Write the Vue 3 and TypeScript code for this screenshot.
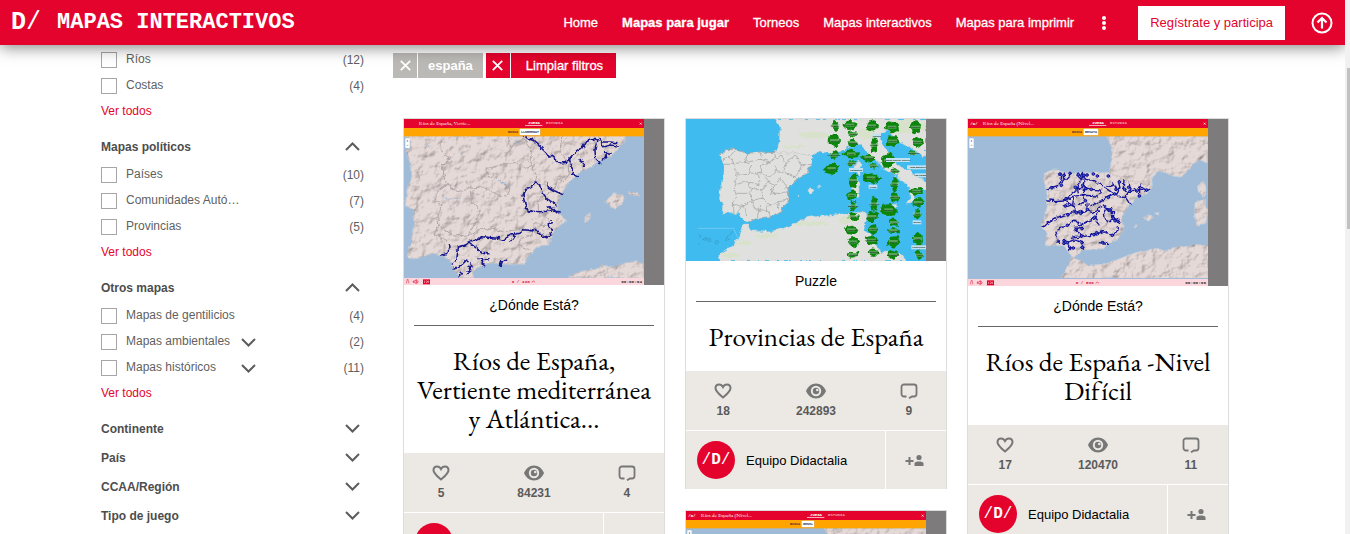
<script setup lang="ts">
import { ref } from 'vue'

type MapKind = 'coast' | 'provinces' | 'peninsula'

interface Facet { label: string; count: number; nested?: boolean }
interface FacetGroup { title?: string; items: Facet[] }
interface Card {
  id: string
  kind: MapKind
  width: number
  height: number
  bar?: { title: string; target: string; score: string; time: string; logo: boolean }
  game: string
  title: string
  likes: number
  views: number
  comments: number
}

const nav = ['Home', 'Mapas para jugar', 'Torneos', 'Mapas interactivos', 'Mapas para imprimir']
const current = 'Mapas para jugar'

const groups: FacetGroup[] = [
  { items: [{ label: 'Ríos', count: 12 }, { label: 'Costas', count: 4 }] },
  {
    title: 'Mapas políticos',
    items: [
      { label: 'Países', count: 10 },
      { label: 'Comunidades Autó…', count: 7 },
      { label: 'Provincias', count: 5 },
    ],
  },
  {
    title: 'Otros mapas',
    items: [
      { label: 'Mapas de gentilicios', count: 4 },
      { label: 'Mapas ambientales', count: 2, nested: true },
      { label: 'Mapas históricos', count: 11, nested: true },
    ],
  },
]
const collapsed = ['Continente', 'País', 'CCAA/Región', 'Tipo de juego']
const checked = ref<string[]>([])

const columns: Card[][] = [
  [
    {
      id: 'mediterranea', kind: 'coast', width: 780, height: 498,
      bar: { title: 'Ríos de España, Vertie…', target: 'LLOBREGAT', score: '0 / 220', time: '00:00:04', logo: false },
      game: '¿Dónde Está?', title: 'Ríos de España, Vertiente mediterránea y Atlántica...', likes: 5, views: 84231, comments: 4,
    },
  ],
  [
    {
      id: 'provincias', kind: 'provinces', width: 780, height: 426,
      game: 'Puzzle', title: 'Provincias de España', likes: 18, views: 242893, comments: 9,
    },
    {
      id: 'nivel-medio', kind: 'peninsula', width: 780, height: 501,
      bar: { title: 'Ríos de España (Nivel…', target: 'GENIL', score: '0 / 300', time: '00:00:05', logo: true },
      game: '¿Dónde Está?', title: 'Ríos de España -Nivel Medio', likes: 12, views: 98120, comments: 7,
    },
  ],
  [
    {
      id: 'nivel-dificil', kind: 'peninsula', width: 780, height: 501,
      bar: { title: 'Ríos de España (Nivel…', target: 'BESAYA', score: '0 / 590', time: '00:00:06', logo: true },
      game: '¿Dónde Está?', title: 'Ríos de España -Nivel Difícil', likes: 17, views: 120470, comments: 11,
    },
  ],
]

const coastLand =
  'M27 78 45 92 47 112 34 122 48 165 46 205 36 240 31 285 40 292 58 300 56 340 50 392 38 438 42 446 78 440 115 430 145 440 165 455 172 470 190 492 196 504 236 504 232 488 252 468 300 460 362 465 388 460 405 432 420 412 462 408 468 378 478 362 500 345 515 330 495 312 488 288 496 258 516 225 550 190 600 162 650 138 670 112 692 90 690 78Z M628 274 656 252 686 256 681 280 662 297 645 290 642 278Z M700 246 725 248 732 260 712 257Z M567 320 588 308 584 326 574 338Z M518 503 560 484 600 478 625 466 655 472 690 458 720 456 747 458 747 503Z'
const coastBorders = [
  'M140 78 137 120 165 145 140 165 148 195 155 225 122 250 124 272 140 288 128 320 132 345 120 372 155 390',
  'M155 225 188 245 225 235 262 230 312 255 338 258 345 235 310 205 280 200 270 180 330 160 365 158 395 175 410 168 425 200 418 230',
  'M225 235 232 280 256 298 245 330 222 375 175 378 132 345M222 375 270 355 330 365 390 352 440 375 450 345 420 340 410 375 380 385 370 405 405 420',
  'M338 78 348 110 385 85 410 120 402 150 412 168M500 78 495 130 520 155 525 190 505 215 490 200 480 235 455 255 430 270 430 300 455 320 470 340',
]
const coastRivers = [
  'M385 78 400 90 412 88 430 105 450 125 470 140 490 158 510 158 520 152 545 125 560 115 572 95 600 85 606 92 600 120 602 145 615 158',
  'M520 155 535 175 530 190 550 200M555 150 568 158 566 172M612 85 618 95 640 96 668 98M620 98 626 110 645 105 670 108M622 150 635 140 632 128 648 130',
  'M440 235 435 222 420 219 408 230 392 238 384 255 388 275 395 298 405 304 435 305 465 303 492 305M437 225 442 250 455 268 470 275 486 288M458 218 460 232 480 243 503 254M455 292 470 290 485 308M472 335 460 338 460 350 468 360 470 375',
  'M172 462 185 448 190 412 215 402 260 380 300 384 325 390 352 374 372 370 385 356 405 358 425 362 432 370 445 382 470 376M352 374 358 378 348 392',
  'M228 402 245 415 262 430 282 432M160 402 162 415 155 430 140 435M175 475 200 465 215 450 222 455M222 468 228 480 218 488 232 462M253 446 262 450 258 462 272 467M252 446 282 446M316 466 320 455 338 450M192 498 202 488',
]

const penLand =
  'M250 205 253 190 268 182 292 180 340 188 400 190 448 188 458 150 456 112 440 80 744 80 744 158 722 150 700 160 680 185 665 200 640 198 612 186 592 184 572 205 574 236 560 252 530 262 505 288 480 330 492 350 470 388 430 416 366 416 350 436 340 444 325 425 312 410 290 402 256 406 262 370 244 352 254 320 262 290 258 262 262 240Z M305 504 318 475 335 445 350 450 385 466 420 464 470 450 520 430 570 418 620 420 690 408 744 406 744 504Z M714 224 735 212 738 245 728 262 716 245Z M706 280 735 268 742 300 738 335 712 346 704 320Z M550 324 570 312 580 322 566 332Z M586 310 598 308 596 314Z M520 348 528 342 526 352Z'
const penBorders = [
  'M262 240 300 238 300 262 322 268 312 300 280 330 290 345 285 375 292 400',
  'M448 188 480 205 520 215 572 228M340 188 345 225 370 200 430 210 420 260 380 270 350 268M300 345 370 352 430 340 455 360 470 375',
]
const penRivers = [
  'M258 244 275 232 300 225 318 205 330 192M295 190 305 200 300 222M312 188 310 208M350 190 358 210 372 205 370 190 360 198 376 200',
  'M262 270 290 272 312 270 340 262 380 256 410 258 425 252 420 240 395 238 370 232 350 234 345 245 325 262',
  'M380 208 400 212 425 225 445 238 465 252 480 260 498 264 510 284M365 205 352 235 356 250M376 205 370 240 378 236',
  'M445 262 470 250 480 232 475 215M470 238 462 222 445 228M492 205 490 235 502 245M508 215 510 240 495 262M522 240 545 232 560 242 572 238M540 225 538 258M515 245 550 240',
  'M248 352 260 340 290 322 325 310 355 308 380 300 400 308 420 290 430 285 445 300M318 268 325 280 310 290M340 265 338 285 320 292M330 280 345 300 320 315M370 240 372 275 358 285M380 275 382 300M390 290 420 275 465 250',
  'M298 400 288 370 300 352 322 345 345 330 360 345 380 335 405 325 420 345M345 352 365 350M405 320 418 300',
  'M335 385 365 380 400 375 430 365 455 375 470 365 472 350M310 390 325 395 345 390 365 398M365 375 345 360M320 395 330 415 340 412M365 395 372 415M362 410 370 420M415 398 442 400',
  'M440 292 430 310 432 325 452 335M445 300 460 308 462 325 480 338M452 292 455 320 470 330M450 330 480 325',
]
const penDots = [
  [276, 233], [300, 192], [312, 196], [330, 190], [355, 194], [364, 198], [372, 196], [381, 195], [400, 192], [412, 198], [445, 198],
  [318, 266], [304, 226], [346, 232], [368, 226], [378, 236], [394, 238], [445, 262], [464, 252], [478, 216], [468, 238], [494, 238],
  [506, 232], [510, 244], [538, 258], [560, 240], [316, 288], [324, 314], [349, 308], [362, 310], [382, 298], [376, 272],
  [322, 346], [348, 358], [366, 356], [404, 322], [450, 300], [460, 325], [465, 332], [474, 334], [312, 392], [312, 400], [322, 398],
  [365, 378], [366, 398], [367, 412], [340, 414], [410, 368], [428, 398], [402, 374], [457, 376],
]

const provLand =
  'M287 27 300 50 298 95 288 128 245 126 200 130 165 118 140 118 118 136 132 160 128 200 116 260 128 282 126 312 175 310 190 335 205 338 230 325 272 320 305 302 328 268 320 238 345 215 380 190 398 158 394 138 415 122 445 130 480 128 510 108 545 106 562 130 590 150 615 180 655 200 690 235 690 268 680 282 700 275 712 240 738 238 738 215 705 195 690 180 650 165 632 130 605 105 598 75 625 62 660 95 738 140 738 27Z M600 292 650 282 640 318 605 305Z M535 150 545 165 535 198 525 175Z M510 215 535 205 538 262 515 262Z M120 453 120 430 160 405 180 375 190 345 205 345 212 362 262 366 330 350 380 322 450 316 520 308 555 306 560 330 550 360 580 380 600 425 660 430 680 453Z M380 240 395 232 402 242 392 250Z M412 230 420 228 420 233Z M354 260 360 256 358 264Z'
const provBorders = [
  'M128 150 150 142 165 118M150 142 158 160 130 160M158 160 195 158 205 130M195 158 240 148 245 128M240 148 272 155 288 128M272 155 300 135 318 160 345 135 362 165 395 160',
  'M158 160 172 192 205 190 215 165M205 190 240 188 245 165 272 155M240 188 270 200 290 180 310 190 318 160M310 190 345 200 365 165M345 200 350 212M290 180 285 165',
  'M172 192 162 230 170 260 160 282 162 310M170 222 205 215 240 225 235 190M205 215 215 240 200 250 170 250M215 240 250 238 262 215 285 225 300 205 315 225 320 238M262 215 255 200',
  'M160 282 190 290 215 270 250 265 270 285 298 272 325 268M215 270 208 250M250 265 245 240M270 285 262 300 272 320M190 290 200 318M215 270 225 300 262 300M298 272 295 300M270 250 285 225M270 250 300 250 320 245M240 285 232 322M185 290 172 308',
]

interface Piece { name: string; x: number; y: number; w: number; h: number }
const rawPieces: [string, number, number, number, number][] = [
  ['Cádiz', 466, 48, 26, 34], ['Huesca', 463, 92, 34, 42], ['Pontevedra', 462, 136, 22, 26], ['Córdoba', 455, 176, 48, 34],
  ['Toledo', 510, 46, 46, 26], ['Girona', 519, 73, 30, 18], ['Málaga', 519, 98, 32, 22], ['León', 514, 132, 46, 28],
  ['Melilla', 515, 160, 22, 14], ['Burgos', 521, 212, 26, 48], ['Jaén', 516, 256, 36, 28], ['Zaragoza', 519, 288, 22, 26],
  ['Soria', 520, 320, 32, 26], ['Asturias', 514, 360, 42, 26], ['Teruel', 519, 396, 32, 38], ['Vizcaya', 518, 434, 32, 18],
  ['Navarra', 575, 48, 38, 34], ['Lleida', 582, 106, 26, 46], ['Granada', 566, 143, 44, 22], ['Álava', 580, 168, 28, 20],
  ['Ciudad Real', 573, 204, 50, 32], ['Palencia', 583, 282, 18, 44], ['Sevilla', 576, 320, 36, 34], ['Almería', 580, 358, 30, 30],
  ['Guadalajara', 575, 391, 46, 26], ['Cantabria', 580, 427, 32, 22], ['Teruel', 636, 52, 38, 38], ['Huelva', 638, 94, 34, 36],
  ['Orense', 625, 152, 40, 46], ['Lugo', 645, 222, 22, 44], ['Murcia', 644, 262, 30, 28], ['Badajoz', 626, 300, 54, 36],
  ['Ávila', 642, 338, 26, 26], ['La Rioja', 640, 362, 32, 16], ['Madrid', 640, 395, 34, 36], ['Salamanca', 639, 434, 38, 26],
  ['Cuenca', 707, 52, 38, 38], ['Segovia', 713, 97, 32, 30], ['Tarragona', 700, 130, 22, 18], ['Albacete', 645, 184, 26, 20],
  ['Valencia', 710, 244, 38, 28], ['Alicante', 714, 278, 32, 30], ['Ávila', 711, 312, 26, 26], ['Lugo', 713, 386, 30, 34],
  ['Álava', 718, 436, 20, 28], ['Castellón', 718, 410, 20, 22],
]
const pieces: Piece[] = rawPieces.map(([name, x, y, w, h]) => ({ name, x, y, w, h }))
const islands: Piece[] = [
  ['Santa Cruz de Tenerife', 654, 150, 72], ['Islas Baleares', 714, 172, 66], ['Las Palmas', 722, 196, 34], ['Ceuta', 579, 230, 26],
  ['Guipúzcoa', 528, 180, 42], ['Pontevedra', 716, 412, 44], ['Melilla', 711, 337, 26], ['Vizcaya', 590, 77, 26],
].map(([name, x, y, w]) => ({ name: name as string, x: x as number, y: y as number, w: w as number, h: 11 }))

// Irregular outline of a puzzle piece, varied by its index
function outline(p: Piece, i: number): string {
  const corners = 14
  const points: string[] = []
  for (let k = 0; k < corners; k++) {
    const angle = (k / corners) * Math.PI * 2
    const reach = 0.92 + 0.12 * Math.sin(k * 2.1 + i * 1.7) + 0.1 * Math.sin(k * 0.9 + i)
    points.push(`${(p.x + (Math.cos(angle) * p.w * reach) / 1.9).toFixed(1)},${(p.y + (Math.sin(angle) * p.h * reach) / 1.9).toFixed(1)}`)
  }
  return points.join(' ')
}
</script>

<template>
  <div class="shell">
    <div class="page">
      <header class="topbar">
        <a class="brand" href="#"><span class="brand-d">D<i>/</i></span><span class="brand-name">MAPAS INTERACTIVOS</span></a>
        <nav class="nav">
          <a v-for="item in nav" :key="item" href="#" :class="{ active: item === current }">{{ item }}</a>
        </nav>
        <button class="icon-button more" type="button" aria-label="Más opciones">
          <svg width="4" height="14" viewBox="0 0 4 14" fill="#fff"><circle cx="2" cy="2" r="2" /><circle cx="2" cy="7" r="2" /><circle cx="2" cy="12" r="2" /></svg>
        </button>
        <a class="register" href="#">Regístrate y participa</a>
        <button class="icon-button up" type="button" aria-label="Subir">
          <svg width="22" height="22" viewBox="0 0 22 22" fill="none" stroke="#fff" stroke-width="2"><circle cx="11" cy="11" r="9.5" /><path d="M11 16.500V6.500M6.500 10.500 11 6l4.500 4.500" stroke-width="2.200" /></svg>
        </button>
      </header>

      <div class="content">
        <aside class="sidebar">
          <section v-for="(group, g) in groups" :key="g" class="group">
            <button v-if="group.title" class="group-head" type="button">
              {{ group.title }}
              <svg width="15" height="10" viewBox="0 0 15 10"><path d="M1 8 7.500 1.500 14 8" /></svg>
            </button>
            <ul class="facets" :class="{ headed: group.title }">
              <li v-for="item in group.items" :key="item.label">
                <input :id="item.label" v-model="checked" type="checkbox" :value="item.label" />
                <label :for="item.label">{{ item.label }}</label>
                <button v-if="item.nested" class="icon-button" type="button" :aria-label="'Desplegar ' + item.label">
                  <svg width="15" height="10" viewBox="0 0 15 10"><path d="M1 2l6.500 6.500L14 2" /></svg>
                </button>
                <span class="count">({{ item.count }})</span>
              </li>
            </ul>
            <a class="see-all" href="#">Ver todos</a>
          </section>
          <button v-for="name in collapsed" :key="name" class="group-head" type="button">
            {{ name }}
            <svg width="15" height="10" viewBox="0 0 15 10"><path d="M1 1l6.500 6.500L14 1" /></svg>
          </button>
        </aside>

        <main class="results">
          <div class="filters">
            <button class="chip" type="button">
              <span class="cross"><svg width="11" height="11" viewBox="0 0 11 11"><path d="M.8.8l9.400 9.400M10.200.8.8 10.200" /></svg></span>
              <span class="chip-text"><b>españa</b></span>
            </button>
            <button class="chip clear" type="button">
              <span class="cross"><svg width="11" height="11" viewBox="0 0 11 11"><path d="M.8.8l9.400 9.400M10.200.8.8 10.200" /></svg></span>
              <span class="chip-text">Limpiar filtros</span>
            </button>
          </div>

          <div class="columns">
            <div v-for="(column, c) in columns" :key="c" class="column">
              <article v-for="card in column" :key="card.id" class="card">
                <svg class="map" :viewBox="`0 0 ${card.width} ${card.height}`" role="img" :aria-label="card.title">
                  <defs>
                    <filter :id="'relief-' + card.id" x="0" y="0" width="100%" height="100%" color-interpolation-filters="sRGB">
                      <feTurbulence type="fractalNoise" baseFrequency=".03" numOctaves="5" seed="7" result="noise" />
                      <feDiffuseLighting surfaceScale="5" diffuseConstant="1.13" lighting-color="#fff" result="light">
                        <feDistantLight azimuth="225" elevation="62" />
                      </feDiffuseLighting>
                      <feDisplacementMap in="SourceGraphic" in2="noise" scale="12" xChannelSelector="R" yChannelSelector="G" result="shore" />
                      <feBlend in="shore" in2="light" mode="multiply" />
                      <feComposite in2="shore" operator="in" />
                    </filter>
                    <filter :id="'wiggle-' + card.id" x="-5%" y="-5%" width="110%" height="110%">
                      <feTurbulence type="fractalNoise" baseFrequency=".06" numOctaves="3" seed="3" result="noise" />
                      <feDisplacementMap in="SourceGraphic" in2="noise" scale="16" xChannelSelector="R" yChannelSelector="G" />
                    </filter>
                    <clipPath :id="'view-' + card.id"><rect width="720" :height="card.height" /></clipPath>
                    <clipPath :id="'land-' + card.id"><path :d="provLand" /></clipPath>
                  </defs>
                  <rect width="780" :height="card.height" fill="#7e7b7c" />

                  <g v-if="card.kind === 'coast'" :clip-path="`url(#view-${card.id})`">
                    <rect width="720" height="498" fill="#9fbbd7" />
                    <g transform="translate(-27 -27)" stroke-linejoin="round" stroke-linecap="round">
                      <path :d="coastLand" fill="#e5d9d7" stroke="#a5a3a6" stroke-width="1.500" :filter="`url(#relief-${card.id})`" />
                      <g :filter="`url(#wiggle-${card.id})`" fill="none">
                        <path v-for="d in coastBorders" :key="d" :d="d" stroke="#a39c9b" stroke-width="2.500" />
                        <path d="M190 120l10 15M145 262l20 5 30-2M350 90l25 12M180 425l-4 18M95 100l8 12M310 215l28 6" stroke="#9fbbd7" stroke-width="3" />
                        <path v-for="d in coastRivers" :key="d" :d="d" stroke="#13138c" stroke-width="4.500" />
                      </g>
                    </g>
                  </g>

                  <g v-else-if="card.kind === 'peninsula'" :clip-path="`url(#view-${card.id})`">
                    <rect width="720" height="501" fill="#9fbbd7" />
                    <g transform="translate(-24 -27)" stroke-linejoin="round" stroke-linecap="round">
                      <path :d="penLand" fill="#e5d9d7" stroke="#c4bfc4" stroke-width="1.500" :filter="`url(#relief-${card.id})`" />
                      <g :filter="`url(#wiggle-${card.id})`" fill="none">
                        <path v-for="d in penBorders" :key="d" :d="d" stroke="#b3acac" stroke-width="1.500" />
                        <path v-for="d in penRivers" :key="d" :d="d" stroke="#13139a" stroke-width="4" />
                      </g>
                      <circle v-for="([x, y], i) in penDots" :key="i" :cx="x" :cy="y" r="4" fill="#4a62c4" stroke="#10109a" stroke-width="3" />
                    </g>
                  </g>

                  <g v-else :clip-path="`url(#view-${card.id})`">
                    <rect width="720" height="426" fill="#3fbbf0" />
                    <g transform="translate(-18 -27)" stroke-linejoin="round">
                      <path :d="provLand" fill="#e0e1df" stroke="#c9d3d2" stroke-width="1.500" :filter="`url(#wiggle-${card.id})`" />
                      <g fill="#d3e3bd" opacity=".6" :clip-path="`url(#land-${card.id})`">
                        <g :filter="`url(#wiggle-${card.id})`">
                          <ellipse cx="400" cy="75" rx="45" ry="10" /><ellipse cx="680" cy="50" rx="60" ry="20" /><ellipse cx="560" cy="70" rx="26" ry="18" />
                          <ellipse cx="345" cy="110" rx="32" ry="5" /><ellipse cx="190" cy="400" rx="26" ry="6" /><ellipse cx="390" cy="340" rx="60" ry="6" />
                          <ellipse cx="260" cy="378" rx="35" ry="5" /><ellipse cx="500" cy="330" rx="24" ry="12" /><ellipse cx="150" cy="435" rx="26" ry="6" />
                        </g>
                      </g>
                      <g :filter="`url(#wiggle-${card.id})`" fill="none">
                        <path d="M287 128 300 130 345 128 394 138" stroke="#b8bcba" stroke-width="1.500" />
                        <path v-for="d in provBorders" :key="d" :d="d" stroke="#9a9c9b" stroke-width="2" />
                        <path d="M118 136 140 118 165 118 200 130 245 126 288 128M398 158 380 190 345 215 320 238 328 268 305 302 272 320 230 325 205 338" stroke="#8f9a9c" stroke-width="2" />
                      </g>
                      <path d="M54 355H160L178 392" fill="none" stroke="#85d2f2" stroke-width="2" />
                      <g fill="none" stroke="#3494c0" stroke-width="2"><path d="M56 374l6 4-3 6M54 400l5 3M68 388l10-6 4 4-8 5zM136 395l5-14 7-6M150 375l8-12M142 390l8-4" /><circle cx="88" cy="390" r="5" /><circle cx="110" cy="397" r="5" /></g>
                      <g :filter="`url(#wiggle-${card.id})`">
                        <polygon v-for="(p, i) in pieces" :key="i" :points="outline(p, i)" fill="#0b850b" />
                      </g>
                      <g v-for="(p, i) in pieces" :key="'n' + i">
                        <rect :x="p.x - 13" :y="p.y - 5" width="26" height="9" fill="#9fc6a2" opacity=".5" />
                        <text class="tag" :x="p.x" :y="p.y + 3">{{ p.name }}</text>
                      </g>
                      <g v-for="p in islands" :key="'i' + p.name">
                        <rect :x="p.x - p.w / 2" :y="p.y - 6" :width="p.w" height="12" fill="#c3e2f1" />
                        <text class="tag" :x="p.x" :y="p.y + 3">{{ p.name }}</text>
                      </g>
                    </g>
                  </g>

                  <g v-if="card.bar">
                    <rect width="720" height="27" fill="#e4032c" />
                    <rect y="27" width="720" height="25" fill="#ffa400" />
                    <text v-if="card.bar.logo" class="mini-mono white" x="7" y="19">/D/</text>
                    <text class="mini-title" x="44" y="19">{{ card.bar.title }}</text>
                    <text class="mini-mono white" x="372" y="14">JUEGA</text>
                    <text class="mini-mono pale" x="426" y="14">ESTUDIA</text>
                    <rect x="363" y="18" width="52" height="2" fill="#fff" />
                    <path d="M707 11l6 6M713 11l-6 6" stroke="#fff" stroke-width="2" />
                    <text class="mini-mono dark" x="312" y="42">BUSCA</text>
                    <rect x="346" y="29" :width="card.bar.target.length * 6 + 9" height="20" fill="#fff" stroke="#c78a20" />
                    <text class="mini-mono dark" x="351" y="42">{{ card.bar.target }}</text>
                    <rect x="4" y="58" width="13" height="29" fill="#fff" />
                    <path d="M8 66h5M10.500 63.500v5M8 79h5" stroke="#666" stroke-width="1.500" />
                    <g :transform="`translate(0 ${card.height - 21})`">
                      <rect width="720" height="21" fill="#fbd7dd" />
                      <path d="M8 16v-7l3-3 3 3v7M9 6l2-3 2 3" fill="none" stroke="#e4405c" stroke-width="2" />
                      <path d="M28 9h4l5-4v12l-5-4h-4z" fill="none" stroke="#e4032c" stroke-width="2" /><path d="M40 7q4 4 0 8" fill="none" stroke="#e4032c" stroke-width="2" />
                      <rect x="57" y="4" width="21" height="15" fill="#e4032c" /><path d="M62 8v7M66 8l5 3-5 4M73 8v7" fill="none" stroke="#fff" stroke-width="1.500" />
                      <text class="mini-mono score" x="323" y="16">{{ card.bar.score }}</text>
                      <path d="M383 13l5-4 5 4" fill="none" stroke="#d4283f" stroke-width="2" />
                      <text class="mini-mono time" x="714" y="16">{{ card.bar.time }}</text>
                    </g>
                  </g>
                </svg>

                <p class="game">{{ card.game }}</p>
                <h2 class="title"><a href="#">{{ card.title }}</a></h2>
                <div class="stats">
                  <div class="stat">
                    <svg width="18" height="16" viewBox="0 0 18 16"><path d="M9 14.500C5 11 1.500 8.300 1.500 5.200 1.500 3 3.100 1.500 5.100 1.500 6.800 1.500 8.200 2.500 9 4c.8-1.500 2.200-2.500 3.900-2.500 2 0 3.600 1.500 3.600 3.700C16.500 8.300 13 11 9 14.500z" fill="none" stroke="#777" stroke-width="2" /></svg>
                    <span>{{ card.likes }}</span>
                  </div>
                  <div class="stat">
                    <svg width="20" height="16" viewBox="0 0 20 16"><path d="M10 .5C5.500.5 1.800 3.600 0 8c1.800 4.400 5.500 7.500 10 7.500S18.200 12.400 20 8C18.200 3.600 14.500.5 10 .5z" fill="#777" /><circle cx="10" cy="8" r="5.200" fill="#ece9e4" /><circle cx="10" cy="8" r="3.200" fill="#777" /><circle cx="11.300" cy="7" r="1.300" fill="#ece9e4" /></svg>
                    <span>{{ card.views }}</span>
                  </div>
                  <div class="stat">
                    <svg width="18" height="16" viewBox="0 0 18 16"><path d="M6.500 13.500H4A2.500 2.500 0 0 1 1.500 11V4A2.500 2.500 0 0 1 4 1.500h10A2.500 2.500 0 0 1 16.500 4v7a2.500 2.500 0 0 1-2.500 2.500h-2L9 15.300" fill="none" stroke="#777" stroke-width="1.800" /></svg>
                    <span>{{ card.comments }}</span>
                  </div>
                </div>
                <div class="author">
                  <a class="who" href="#"><span class="avatar"><i>/</i>D<i>/</i></span>Equipo Didactalia</a>
                  <button class="follow" type="button" aria-label="Seguir">
                    <svg width="19" height="13" viewBox="0 0 19 13" fill="#777"><path d="M3.500 3h2v3h3v2h-3v3h-2V8h-3V6h3z" /><circle cx="14" cy="3.500" r="2.600" /><path d="M9.500 12V9.500c0-1.500 2.500-2 4.500-2s4.500.5 4.500 2V12z" /></svg>
                  </button>
                </div>
              </article>
            </div>
          </div>
        </main>
      </div>
    </div>
    <div class="scroll-track" aria-hidden="true"><div class="scroll-thumb"></div></div>
  </div>
</template>

<style>
body {
  margin: 0;
  background: #fff;
}
</style>

<style scoped>
.shell {
  display: flex;
  height: 100vh;
  overflow: hidden;
  font-family: 'Liberation Sans', Arial, sans-serif;
  font-size: 12px;
  color: #5f5f5f;
}
.shell * {
  box-sizing: border-box;
}
a {
  color: inherit;
  text-decoration: none;
}
button {
  border: 0;
  padding: 0;
  background: none;
  color: inherit;
  font: inherit;
  cursor: pointer;
}
.page {
  flex: 1;
  min-width: 0;
}
.topbar {
  position: relative;
  z-index: 2;
  display: flex;
  align-items: center;
  height: 45px;
  padding: 0 12px 0 11px;
  background: #e4032c;
  box-shadow: 0 2px 16px rgba(0, 0, 0, 0.5);
  color: #fff;
  font-size: 13px;
}
.brand {
  display: flex;
  align-items: center;
  gap: 16px;
  margin-right: auto;
  font-family: 'Liberation Mono', 'Courier New', monospace;
  font-weight: bold;
  white-space: nowrap;
}
.brand-d {
  font-size: 25px;
}
.brand-d i,
.avatar i {
  font-style: normal;
  font-weight: normal;
}
.brand-name {
  font-size: 22px;
}
.nav {
  display: flex;
  gap: 24px;
  white-space: nowrap;
}
.nav a {
  -webkit-text-stroke: 0.3px #fff;
}
.nav .active {
  font-weight: bold;
}
.icon-button {
  display: flex;
  align-items: center;
  justify-content: center;
}
.more {
  width: 24px;
  height: 24px;
  margin: 0 22px 0 18px;
}
.register {
  padding: 0 12px;
  background: #fff;
  color: #e4032c;
  line-height: 34px;
  white-space: nowrap;
}
.up {
  margin-left: 26px;
}
.content {
  display: flex;
  gap: 29px;
  max-width: 1143px;
  margin: 0 auto;
}
.sidebar {
  flex: 0 0 263px;
  padding-top: 2px;
}
.sidebar svg {
  fill: none;
  stroke: #5c5c5c;
  stroke-width: 2;
}
.group {
  margin-bottom: 9px;
}
.group-head {
  display: flex;
  align-items: center;
  justify-content: space-between;
  width: 100%;
  height: 29px;
  padding-right: 4px;
  color: #4d4d4d;
  font-weight: bold;
}
.facets {
  margin: 0;
  padding: 0;
  list-style: none;
}
.facets.headed {
  padding-top: 1px;
}
.facets li {
  display: flex;
  align-items: center;
  height: 26px;
}
.facets input {
  appearance: none;
  width: 16px;
  height: 16px;
  margin: 0 9px 0 0;
  border: 1px solid #a6a6a6;
  background: #fff;
}
.facets label {
  width: 115px;
  padding-bottom: 3px;
  white-space: nowrap;
}
.facets .count {
  margin-left: auto;
}
.see-all {
  display: block;
  color: #e4032c;
  line-height: 24px;
}
.results {
  flex: 1;
  min-width: 0;
  padding-top: 8px;
}
.filters {
  display: flex;
  gap: 3px;
  margin-bottom: 40px;
}
.chip {
  display: flex;
  gap: 1px;
  height: 25px;
  color: #fff;
  font-size: 13px;
  line-height: 25px;
}
.cross {
  display: flex;
  align-items: center;
  justify-content: center;
  width: 24px;
  height: 25px;
  background: #bab9b5;
}
.cross svg {
  fill: none;
  stroke: #fff;
  stroke-width: 1.8;
}
.chip-text {
  padding: 0 10px;
  background: #bab9b5;
}
.clear .cross,
.clear .chip-text {
  background: #e4032c;
}
.clear .chip-text {
  padding: 0 13px 0 15px;
  -webkit-text-stroke: 0.3px #fff;
}
.columns {
  display: grid;
  grid-template-columns: repeat(3, 1fr);
  gap: 20px;
  padding: 0 15px 0 10px;
}
.column {
  display: flex;
  flex-direction: column;
  gap: 21px;
}
.card {
  border: 1px solid #dcdcdc;
  border-bottom: 0;
  text-align: center;
}
.map {
  display: block;
  width: 100%;
}
.map text {
  font-family: 'Liberation Mono', 'Courier New', monospace;
  font-size: 12px;
  font-weight: bold;
}
.map .mini-title {
  fill: #fff;
  font-family: 'EB Garamond', 'Liberation Serif', serif;
  font-size: 17px;
  font-weight: normal;
}
.map .white {
  fill: #fff;
}
.map .pale {
  fill: #f4a0ae;
}
.map .dark {
  fill: #4b3a2a;
  font-size: 10px;
}
.map .score {
  fill: #d4283f;
  font-size: 13px;
}
.map .time {
  fill: #333;
  font-size: 13px;
  text-anchor: end;
}
.map .tag {
  fill: #16301a;
  font-family: 'Liberation Sans', sans-serif;
  font-size: 7px;
  text-anchor: middle;
}
.game {
  margin: 0 10px;
  border-bottom: 1px solid #666;
  color: #000;
  font-size: 14px;
  line-height: 40px;
}
.title {
  margin: 0;
  padding: 20px 10px;
  color: #000;
  font-family: 'EB Garamond', 'Liberation Serif', serif;
  font-size: 27px;
  font-weight: normal;
  line-height: 29px;
}
.stats {
  display: grid;
  grid-template-columns: 2fr 3fr 2fr;
  height: 59px;
  padding-top: 12px;
  background: #ece9e4;
  color: #5a5a5a;
  font-weight: bold;
}
.stat {
  display: flex;
  flex-direction: column;
  align-items: center;
  gap: 5px;
  line-height: 14px;
}
.author {
  display: flex;
  gap: 1px;
  height: 59px;
  padding-top: 1px;
}
.who {
  display: flex;
  flex: 1;
  align-items: center;
  gap: 11px;
  padding-left: 11px;
  background: #ece9e4;
  color: #000;
  font-size: 13px;
}
.avatar {
  display: flex;
  align-items: center;
  justify-content: center;
  width: 38px;
  height: 38px;
  border-radius: 50%;
  background: #e4032c;
  color: #fff;
  font-family: 'Liberation Mono', 'Courier New', monospace;
  font-size: 16px;
  font-weight: bold;
}
.follow {
  display: flex;
  align-items: center;
  justify-content: center;
  width: 60px;
  padding-right: 4px;
  background: #ece9e4;
}
.scroll-track {
  position: relative;
  z-index: 3;
  flex: 0 0 5px;
  padding: 68px 0 0 2px;
  background: #f1f1f1;
}
.scroll-thumb {
  height: 161px;
  background: #c1c1c1;
}
</style>
